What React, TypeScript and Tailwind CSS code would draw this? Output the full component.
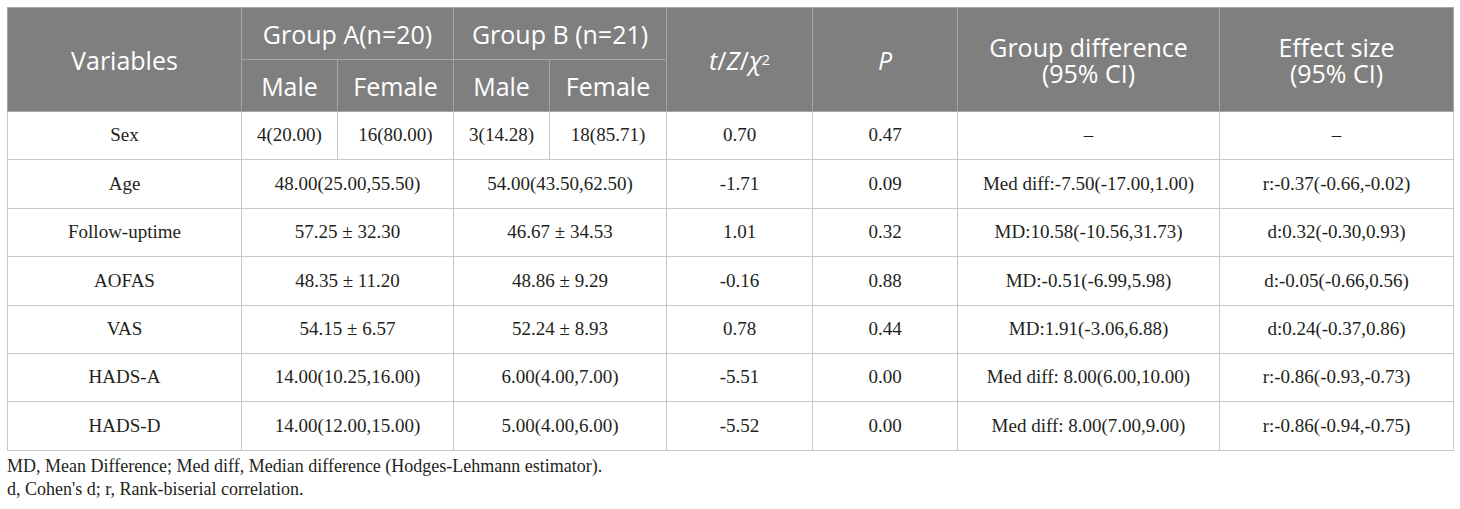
import React from 'react';

type Row = {
  label: string;
  a: string | [string, string];
  b: string | [string, string];
  t: string;
  p: string;
  diff: string;
  effect: string;
};

const rows: Row[] = [
  { label: 'Sex', a: ['4(20.00)', '16(80.00)'], b: ['3(14.28)', '18(85.71)'], t: '0.70', p: '0.47', diff: '–', effect: '–' },
  { label: 'Age', a: '48.00(25.00,55.50)', b: '54.00(43.50,62.50)', t: '-1.71', p: '0.09', diff: 'Med diff:-7.50(-17.00,1.00)', effect: 'r:-0.37(-0.66,-0.02)' },
  { label: 'Follow-uptime', a: '57.25 ± 32.30', b: '46.67 ± 34.53', t: '1.01', p: '0.32', diff: 'MD:10.58(-10.56,31.73)', effect: 'd:0.32(-0.30,0.93)' },
  { label: 'AOFAS', a: '48.35 ± 11.20', b: '48.86 ± 9.29', t: '-0.16', p: '0.88', diff: 'MD:-0.51(-6.99,5.98)', effect: 'd:-0.05(-0.66,0.56)' },
  { label: 'VAS', a: '54.15 ± 6.57', b: '52.24 ± 8.93', t: '0.78', p: '0.44', diff: 'MD:1.91(-3.06,6.88)', effect: 'd:0.24(-0.37,0.86)' },
  { label: 'HADS-A', a: '14.00(10.25,16.00)', b: '6.00(4.00,7.00)', t: '-5.51', p: '0.00', diff: 'Med diff: 8.00(6.00,10.00)', effect: 'r:-0.86(-0.93,-0.73)' },
  { label: 'HADS-D', a: '14.00(12.00,15.00)', b: '5.00(4.00,6.00)', t: '-5.52', p: '0.00', diff: 'Med diff: 8.00(7.00,9.00)', effect: 'r:-0.86(-0.94,-0.75)' },
];

const th = 'border border-[#a6a6a6] font-normal text-white text-center leading-[26px] px-1';
const td = 'border border-[#c8c8c8] text-center px-1';

const GroupCells: React.FC<{ v: string | [string, string] }> = ({ v }) =>
  Array.isArray(v) ? (
    <>
      <td className={td}>{v[0]}</td>
      <td className={td}>{v[1]}</td>
    </>
  ) : (
    <td className={td} colSpan={2}>
      {v}
    </td>
  );

const App: React.FC = () => {
  return (
    <div className="bg-white w-[1460px] h-[509px] pt-[7px] px-[7px] text-[#231f20]">
      <table className="table-fixed border-collapse w-[1446px] font-['Liberation_Serif',serif] text-[19px]">
        <colgroup>
          <col className="w-[234px]" />
          <col className="w-[96px]" />
          <col className="w-[116px]" />
          <col className="w-[96px]" />
          <col className="w-[117px]" />
          <col className="w-[146px]" />
          <col className="w-[145px]" />
          <col className="w-[262px]" />
          <col className="w-[234px]" />
        </colgroup>
        <thead className="bg-[#7f7f7f] font-['Open_Sans',sans-serif] text-[25px]">
          <tr className="h-[52px]">
            <th className={th} rowSpan={2}>Variables</th>
            <th className={th} colSpan={2}>Group A(n=20)</th>
            <th className={th} colSpan={2}>Group B (n=21)</th>
            <th className={th} rowSpan={2}>
              <i>t</i>/<i>Z</i>/<i>χ</i>
              <sup className="text-[15px] relative -top-[5px]">2</sup>
            </th>
            <th className={th} rowSpan={2}><i>P</i></th>
            <th className={th} rowSpan={2}>Group difference<br />(95% CI)</th>
            <th className={th} rowSpan={2}>Effect size<br />(95% CI)</th>
          </tr>
          <tr className="h-[52px]">
            <th className={th}>Male</th>
            <th className={th}>Female</th>
            <th className={th}>Male</th>
            <th className={th}>Female</th>
          </tr>
        </thead>
        <tbody>
          {rows.map((r) => (
            <tr key={r.label} className="h-[48.4px]">
              <td className={td}>{r.label}</td>
              <GroupCells v={r.a} />
              <GroupCells v={r.b} />
              <td className={td}>{r.t}</td>
              <td className={td}>{r.p}</td>
              <td className={td}>{r.diff}</td>
              <td className={td}>{r.effect}</td>
            </tr>
          ))}
        </tbody>
      </table>
      <div className="font-['Liberation_Serif',serif] text-[18px] leading-[23px] mt-[4px]">
        <p>MD, Mean Difference; Med diff, Median difference (Hodges-Lehmann estimator).</p>
        <p>d, Cohen's d; r, Rank-biserial correlation.</p>
      </div>
    </div>
  );
};

export default App;
